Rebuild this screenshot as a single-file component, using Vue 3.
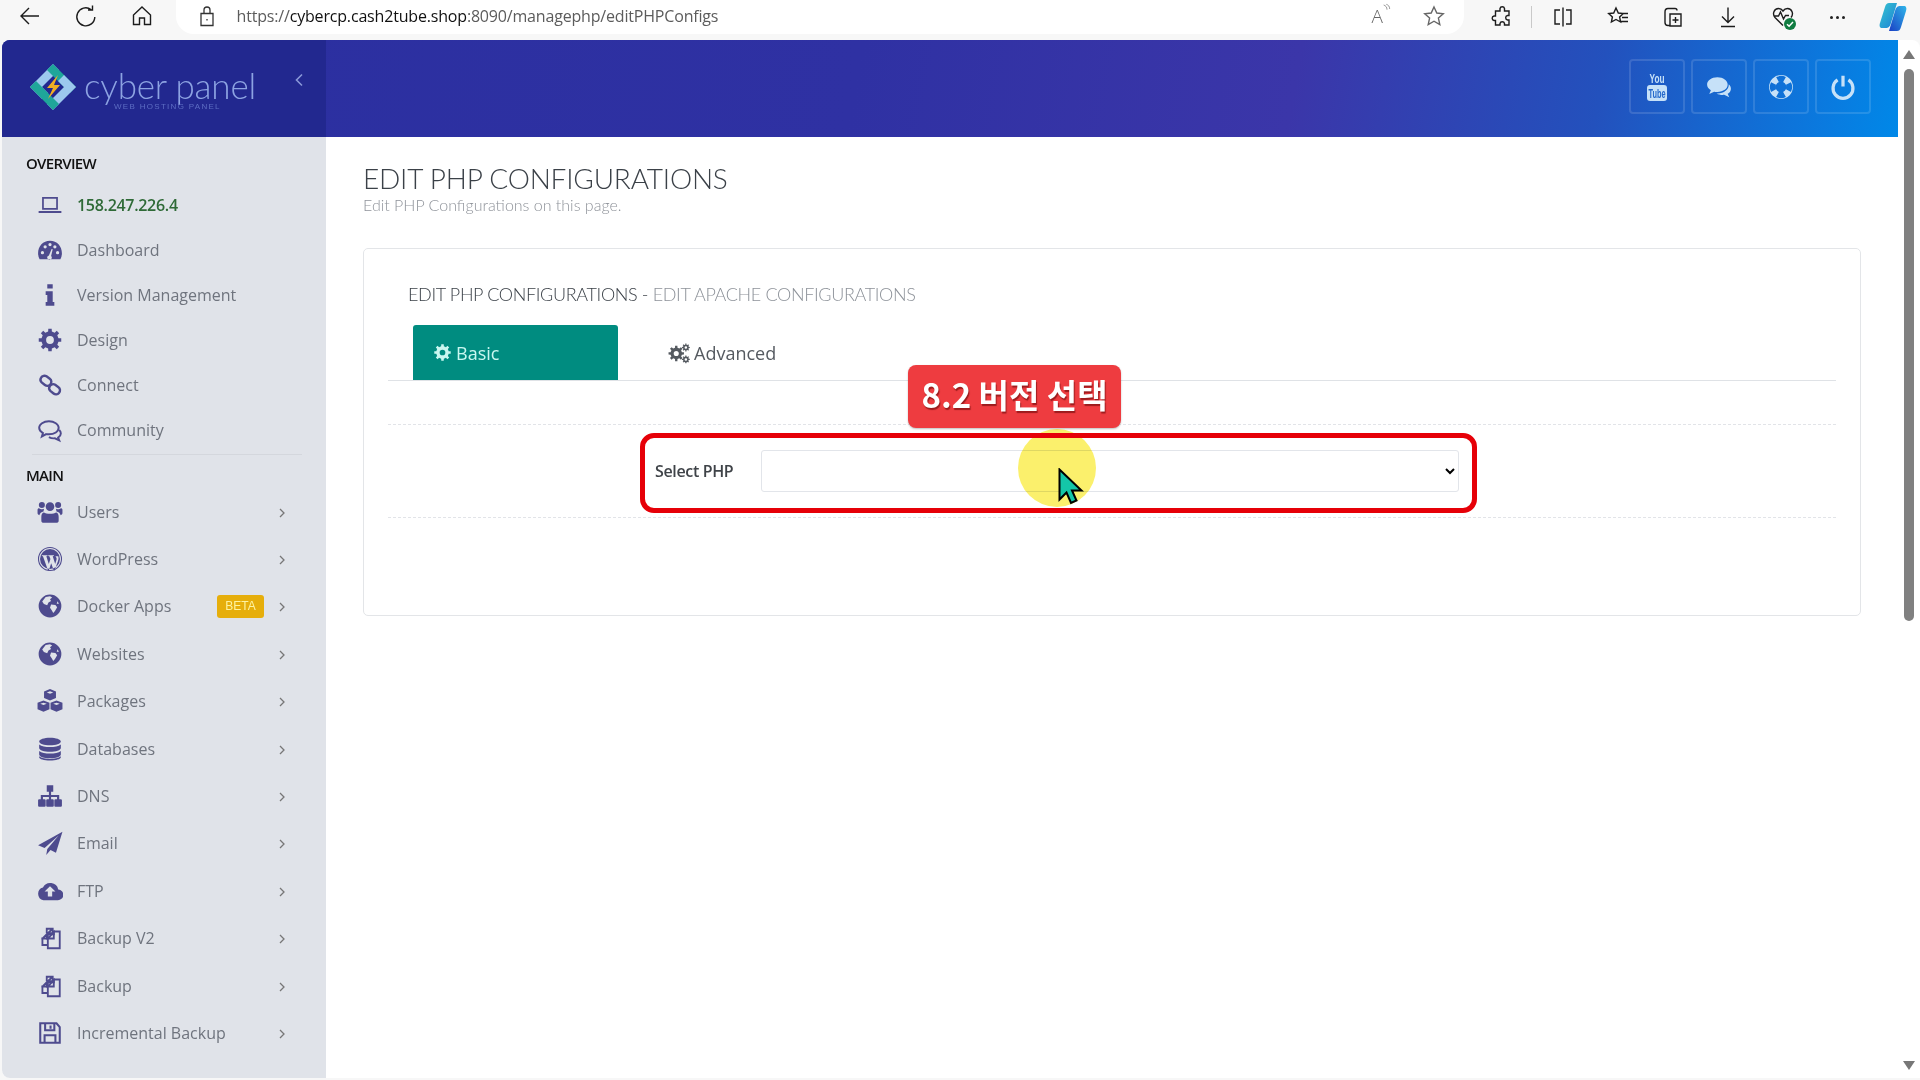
<script setup>
const circle = (cx, cy, r) => `M${cx - r} ${cy}a${r} ${r} 0 1 0 ${r * 2} 0a${r} ${r} 0 1 0 ${-r * 2} 0Z`

// gear outline with a round hole, used by Design, Basic and Advanced
function gear(cx, cy, R, r, hole, n = 8) {
  let d = ''
  for (let i = 0; i < n; i++) {
    const a = (i * 2 * Math.PI) / n
    const w = Math.PI / n
    const pts = [[r, a - w * 0.55], [R, a - w * 0.38], [R, a + w * 0.38], [r, a + w * 0.55]]
    pts.forEach(([rad, ang], j) => {
      const x = (cx + rad * Math.cos(ang)).toFixed(2)
      const y = (cy + rad * Math.sin(ang)).toFixed(2)
      d += `${i === 0 && j === 0 ? 'M' : 'L'}${x} ${y}`
    })
  }
  return d + 'Z' + circle(cx, cy, hole)
}

const line = (d, sw = 1.6) => ({ d, stroke: 'currentColor', sw, fill: 'none' })
const solid = (d) => ({ d, fill: 'currentColor' })

const globe = [solid(circle(12, 12, 10.5) + 'M8 3.6l4-.6 2 1.2-2 1.6 1 1.6-2.4 1.4-1.2 2.4-3-1-1.6-2.4ZM13 10.5l4 .6 1.6 2-2 3.4-1.6 2-1.4-2.6-1.6-2.4ZM19 7.5l1.2 2.4-2 0Z')]
const copy = [line('M9 7.5V3.5h5.5v4H10L5 12.500v6h5M14.500 3.500L9 8.500M4 12.500h5V8', 1.7), line('M10 8.500h5.500V6h5.500v15.500H10Z', 1.7), line('M15.500 6.500L10 12.500h5.500Z', 1.7)]

const icons = {
  laptop: [line('M5.500 5.500h13v10h-13Z', 1.6), line('M1.500 18.500h21', 1.8)],
  dashboard: [solid('M12 3.500C5.600 3.500 1 8.500 1 15c0 2 .5 3.800 1.400 5.500h19.200c.9-1.700 1.400-3.500 1.400-5.500 0-6.500-4.600-11.500-11-11.500Z' + circle(5, 14.500, 1.500) + circle(7.500, 9, 1.500) + circle(12, 7, 1.500) + circle(19, 14.500, 1.500) + circle(16.500, 9, 1.500) + 'M11 17l2.500-6 1 .4-1.500 6.200a2 2 0 1 1-2-.6Z')],
  info: [solid('M9.500 2h5v4h-5ZM8 8.500h6.500v10H16V22H8v-3.500h1.500V12H8Z')],
  cog: [solid(gear(12, 12, 10.5, 8, 3.6))],
  link: [line('M3.800 5.200a3.600 3.600 0 0 1 5-1.200l3 2.200a3.600 3.600 0 0 1 .5 5.300 3.600 3.600 0 0 1-5 .5l-3-2.400a3.500 3.500 0 0 1-.5-4.400Z', 2.2), line('M11.800 13a3.600 3.600 0 0 1 5-1.200l3 2.200a3.600 3.600 0 0 1 .5 5.300 3.600 3.600 0 0 1-5 .5l-3-2.400a3.500 3.500 0 0 1-.5-4.400Z', 2.2)],
  community: [line('M11 4C6 4 2 6.600 2 10c0 2 1.400 3.700 3.500 4.800L4.500 18l4-2.200c.8.100 1.600.200 2.500.200 5 0 9-2.600 9-6s-4-6-9-6Z', 1.8), line('M20.500 12c1 1 1.500 2 1.500 3.200 0 1.500-1 2.800-2.500 3.800l1 2.500-4-1.800c-2 .2-4-.3-5.500-1.200', 1.8)],
  users: [solid(circle(12, 7, 4) + circle(4.500, 5.500, 2.800) + circle(19.500, 5.500, 2.800) + 'M6.500 12.500c1.500 1.500 9.500 1.500 11 0 1.500 0 2.500 1.500 2.500 4v3.500c0 1.200-1 2-2 2H6c-1 0-2-.8-2-2v-3.500c0-2.500 1-4 2.500-4ZM.500 10c0-1 .6-1.500 1.500-1.500 1.200 1.200 3.500 1.200 4.500.6l-.5 2.400c-2 .5-3.500 1.700-3.800 3.500C1 14.500.500 14 .500 13ZM23.500 10c0-1-.6-1.500-1.500-1.500-1.200 1.200-3.500 1.200-4.500.6l.5 2.400c2 .5 3.500 1.700 3.800 3.500 1.200-.5 1.700-1 1.700-2Z')],
  wordpress: [line(circle(12, 12, 10.6), 1), solid(circle(12, 12, 9.200) + 'M4.500 8.500h5.200v.8l-1.100.2 2.300 7 1.500-4.400-1-2.600-1-.2v-.8h5.200v.8l-1.100.2 2.300 7 1.200-3.800c.5-1.500-.4-2.500-1-3.200h2.600c.5 1.500.3 3-.3 4.500l-3.100 8.500h-.7l-2.400-6.500-2.200 6.500h-.7L5.500 9.500l-1-.2Z')],
  globe,
  cubes: [solid('M12 1l5.500 2.200v6L12 11.500 6.500 9.200v-6ZM12 3L9 4.100l3 1.200 3-1.200ZM6 11.500l5.500 2.200v6L6 22 .5 19.700v-6ZM6 13.500l-3 1.100 3 1.200 3-1.200ZM18 11.500l5.500 2.200v6L18 22l-5.500-2.300v-6ZM18 13.500l-3 1.100 3 1.200 3-1.200Z')],
  database: [solid('M12 1.500c5.500 0 10 1.500 10 3.500s-4.500 3.500-10 3.500S2 7 2 5s4.500-3.500 10-3.500ZM2 7.800c2 1.700 6 2.400 10 2.400s8-.7 10-2.400V11c0 2-4.500 3.500-10 3.500S2 13 2 11ZM2 13.800c2 1.700 6 2.400 10 2.400s8-.7 10-2.400V17c0 2-4.500 3.500-10 3.500S2 19 2 17ZM2 18.800c2 1.700 6 2.400 10 2.400s8-.7 10-2.400v.7c0 1.800-4.500 3-10 3s-10-1.200-10-3Z')],
  sitemap: [solid('M9 2h6v6h-2v3h7.500v4H22a1 1 0 0 1 1 1v5a1 1 0 0 1-1 1h-5a1 1 0 0 1-1-1v-5a1 1 0 0 1 1-1h1.500v-2H13v2h1.500a1 1 0 0 1 1 1v5a1 1 0 0 1-1 1h-5a1 1 0 0 1-1-1v-5a1 1 0 0 1 1-1H11v-2H5.500v2H7a1 1 0 0 1 1 1v5a1 1 0 0 1-1 1H2a1 1 0 0 1-1-1v-5a1 1 0 0 1 1-1h1.500v-4H11V8H9Z')],
  plane: [solid('M23.500 1.500L1 14l6 2.500L20 5 9.500 17.500v0l-1 5.500 4-4.500 5 2.500Z')],
  cloud: [solid('M19.600 10.500A7.500 7.500 0 0 0 5.500 8.800 6 6 0 0 0 6 20.500h13a5 5 0 0 0 .6-10ZM12 7.500l5 5h-3v4.500h-4v-4.500H7Z')],
  copy,
  save: [line('M3 3h15l3 3.500V21H3Z', 1.9), line('M7.500 3.500v6h8.500v-6M12.500 5v3M7 20.500v-6.500h10v6.500', 1.9)],
  cogSmall: [solid(gear(9, 12.500, 8.500, 6.300, 2.800)), solid(gear(19.500, 6, 4.300, 3.200, 1.400)), solid(gear(19.500, 19, 4.300, 3.200, 1.400))],
  comments: [solid('M10.500 3C5 3 1 6 1 9.800c0 2.200 1.300 4 3.500 5.300L3 18.500l4.500-2.200c1 .2 2 .3 3 .3 5.500 0 9.500-3 9.500-6.800S16 3 10.500 3Z'), solid('M21 9.500c1.300 1.100 2 2.500 2 4 0 2-1.200 3.700-3 4.800l1.500 3.200-4.700-2.300c-2.500.3-5-.2-7-1.300 6 .5 11.500-3.200 11.200-8.400Z')],
  ring: [solid(circle(12, 12, 11) + circle(12, 12, 5) + 'M7.500 2.800L10 7.400a5.500 5.500 0 0 1 4 0l2.500-4.600a10.200 10.200 0 0 0-9 0ZM2.800 7.500L7.400 10a5.500 5.500 0 0 0 0 4l-4.600 2.500a10.200 10.200 0 0 1 0-9ZM21.200 7.500L16.600 10a5.500 5.500 0 0 1 0 4l4.600 2.500a10.200 10.200 0 0 0 0-9ZM7.500 21.200l2.500-4.600a5.500 5.500 0 0 0 4 0l2.500 4.600a10.200 10.200 0 0 1-9 0Z')],
  power: [line('M7 5.500a9.200 9.200 0 1 0 10 0', 3), line('M12 1.500v10', 3)],
}

const overview = [
  { name: '158.247.226.4', icon: 'laptop', ip: true },
  { name: 'Dashboard', icon: 'dashboard' },
  { name: 'Version Management', icon: 'info' },
  { name: 'Design', icon: 'cog' },
  { name: 'Connect', icon: 'link' },
  { name: 'Community', icon: 'community' },
]

const mainMenu = [
  { name: 'Users', icon: 'users' },
  { name: 'WordPress', icon: 'wordpress' },
  { name: 'Docker Apps', icon: 'globe', badge: 'BETA' },
  { name: 'Websites', icon: 'globe' },
  { name: 'Packages', icon: 'cubes', wide: true },
  { name: 'Databases', icon: 'database' },
  { name: 'DNS', icon: 'sitemap' },
  { name: 'Email', icon: 'plane' },
  { name: 'FTP', icon: 'cloud' },
  { name: 'Backup V2', icon: 'copy' },
  { name: 'Backup', icon: 'copy' },
  { name: 'Incremental Backup', icon: 'save' },
]

const headerButtons = ['comments', 'ring', 'power']
</script>

<template>
  <div class="screen">
    <div class="chrome">
      <div class="nav">
        <svg class="tool-icon" viewBox="0 0 24 24"><path d="M21 12H3.500M11 4l-8 8 8 8" /></svg>
        <svg class="tool-icon" viewBox="0 0 24 24"><path d="M17 5.500A9 9 0 1 0 20.800 13M14 6h4.500V1.500" /></svg>
        <svg class="tool-icon" viewBox="0 0 24 24"><path d="M12 3l8.500 8v9.500h-6V14h-5v6.500h-6V11Z" /></svg>
      </div>
      <div class="address">
        <svg class="lock" viewBox="0 0 24 24"><path d="M6 9.500h12v12H6ZM9 9.500V6a3 3 0 0 1 6 0v3.500M12 15v1.500" /></svg>
        <div class="url"><span class="dim">https://</span>cybercp.cash2tube.shop<span class="dim">:8090/managephp/editPHPConfigs</span></div>
        <div class="address-end">
          <span class="read">A<svg viewBox="0 0 12 16"><path d="M1 2c3 1 5 3 5 7M5 1c3 1 5 3 5 7" /></svg></span>
          <svg class="tool-icon grey" viewBox="0 0 24 24"><path d="M12 3l2.800 6 6.500.7-4.900 4.400 1.400 6.400L12 17.200 6.200 20.500l1.400-6.400L2.700 9.700 9.200 9Z" /></svg>
        </div>
      </div>
      <div class="tools">
        <span class="tool"><svg class="tool-icon" viewBox="0 0 24 24"><path d="M10 3.500a2.300 2.300 0 0 1 4.500 0V6H19v4.500h-1.500a2.300 2.300 0 0 0 0 4.500H19v5h-4.500v-1.500a2.300 2.300 0 0 0-4.500 0V20H5.500v-4.500H4a2.300 2.300 0 0 1 0-4.500h1.500V6H10Z" /></svg></span>
        <span class="divider"></span>
        <span class="tool"><svg class="tool-icon" viewBox="0 0 24 24"><path d="M12 2.500v19M9 5H4v14h5M15 5h5v14h-5" /></svg></span>
        <span class="tool"><svg class="tool-icon" viewBox="0 0 24 24"><path d="M10 3l2.300 5 5 .6-3.700 3.300 1 5.100L10 14.500 5.400 17l1-5.100-3.700-3.300 5-.6ZM15 8.500h7M16 12.500h6M15 16.500h7" /></svg></span>
        <span class="tool"><svg class="tool-icon" viewBox="0 0 24 24"><path d="M9 20.500H7a3 3 0 0 1-3-3V7c0-2 1-3.500 3-3.500h7c1 0 2 .5 2 2M9 9h11v12H9ZM14.500 12v6M11.500 15h6" /></svg></span>
        <span class="tool"><svg class="tool-icon" viewBox="0 0 24 24"><path d="M12 2.500v15M6 11.500l6 6 6-6M5 21.500h14" /></svg></span>
        <span class="tool health">
          <svg class="tool-icon" viewBox="0 0 24 24"><path d="M12 20.500L4 12.500C1 9 3 3.500 7.500 3.500c2 0 3.500 1 4.500 2.500 1-1.500 2.500-2.500 4.500-2.500 4.500 0 6.500 5.500 3.500 9M3 11h4.500l2-4 3 7 2-3.500H18" /></svg>
          <svg class="health-ok" viewBox="0 0 12 12"><circle cx="6" cy="6" r="6" fill="#107c41" /><path d="M3 6.200l2.100 2L9 4" fill="none" stroke="#fff" stroke-width="1.500" /></svg>
        </span>
        <span class="tool dots"><i></i><i></i><i></i></span>
        <span class="tool">
          <svg class="copilot" viewBox="0 0 28 30">
            <defs>
              <linearGradient id="copA" x1="0" y1="0" x2="1" y2="1"><stop offset="0" stop-color="#37c6d0" /><stop offset="1" stop-color="#1b7fd6" /></linearGradient>
              <linearGradient id="copB" x1="0" y1="1" x2="1" y2="0"><stop offset="0" stop-color="#1a3fc4" /><stop offset="1" stop-color="#2fb6ea" /></linearGradient>
            </defs>
            <path d="M10 1h8l-6 20c-1 4-3 5-5 5H3c-2 0-3-2-2-5L6 5c1-3 2-4 4-4Z" fill="url(#copA)" />
            <path d="M18 29h-8l6-20c1-4 3-5 5-5h4c2 0 3 2 2 5l-5 16c-1 3-2 4-4 4Z" fill="url(#copB)" />
          </svg>
        </span>
      </div>
    </div>

    <div class="frame">
      <div class="page">
        <header class="topbar">
          <div class="brand">
            <svg class="logo" viewBox="0 0 46 46">
              <path d="M23 0l6 6-17 17 6 6-6 6L0 23Z" fill="#9cc8ee" />
              <path d="M23 0l23 23-6 6L23 12l-6-6Z" fill="#1fa69a" />
              <path d="M46 23L23 46l-6-6 17-17-6-6 6-6Z" fill="#9cc8ee" />
              <path d="M23 46L0 23l6-6 17 17 6 6Z" fill="#1fa69a" />
              <path d="M28 11l-11 13h6l-5 11 12-14h-6l4-10Z" fill="#f0ae24" />
            </svg>
            <div class="brand-text">
              <div class="brand-name">cyber panel</div>
              <div class="brand-sub">WEB HOSTING PANEL</div>
            </div>
            <svg class="collapse" viewBox="0 0 10 14"><path d="M8 1.500L2.500 7 8 12.500" /></svg>
          </div>
          <div class="topbar-right">
            <button class="head-btn">
              <svg class="head-icon" viewBox="0 0 24 30">
                <text x="12" y="11" text-anchor="middle" textLength="15" lengthAdjust="spacingAndGlyphs" class="yt-you">You</text>
                <rect x="2" y="13" width="20" height="16" rx="3" fill="currentColor" />
                <text x="12" y="26" text-anchor="middle" textLength="17" lengthAdjust="spacingAndGlyphs" class="yt-tube">Tube</text>
              </svg>
            </button>
            <button v-for="b in headerButtons" :key="b" class="head-btn">
              <svg class="head-icon" viewBox="0 0 24 24">
                <path v-for="(p, i) in icons[b]" :key="i" :d="p.d" :fill="p.fill" fill-rule="evenodd" :stroke="p.stroke" :stroke-width="p.sw" />
              </svg>
            </button>
          </div>
        </header>

        <div class="body">
          <aside class="sidebar">
            <div class="section first">OVERVIEW</div>
            <a v-for="item in overview" :key="item.name" class="item">
              <svg class="item-icon" viewBox="0 0 24 24">
                <path v-for="(p, i) in icons[item.icon]" :key="i" :d="p.d" :fill="p.fill" fill-rule="evenodd" :stroke="p.stroke" :stroke-width="p.sw" />
              </svg>
              <span class="item-name" :class="{ ip: item.ip }">{{ item.name }}</span>
            </a>
            <div class="rule"></div>
            <div class="section">MAIN</div>
            <a v-for="item in mainMenu" :key="item.name" class="item tall">
              <svg class="item-icon" :class="{ wide: item.wide }" viewBox="0 0 24 24">
                <path v-for="(p, i) in icons[item.icon]" :key="i" :d="p.d" :fill="p.fill" fill-rule="evenodd" :stroke="p.stroke" :stroke-width="p.sw" />
              </svg>
              <span class="item-name">{{ item.name }}</span>
              <span v-if="item.badge" class="badge">{{ item.badge }}</span>
              <svg class="arrow" viewBox="0 0 8 12"><path d="M2 2l4 4-4 4" /></svg>
            </a>
          </aside>

          <main class="content">
            <h1 class="title">EDIT PHP CONFIGURATIONS</h1>
            <p class="subtitle">Edit PHP Configurations on this page.</p>
            <section class="card">
              <h2 class="card-title">EDIT PHP CONFIGURATIONS - <span>EDIT APACHE CONFIGURATIONS</span></h2>
              <div class="tabs">
                <a class="tab active">
                  <svg class="tab-icon" viewBox="0 0 24 24"><path :d="icons.cog[0].d" fill="currentColor" fill-rule="evenodd" /></svg>
                  Basic
                </a>
                <a class="tab">
                  <svg class="tab-icon" viewBox="0 0 24 24">
                    <path v-for="(p, i) in icons.cogSmall" :key="i" :d="p.d" fill="currentColor" fill-rule="evenodd" />
                  </svg>
                  Advanced
                </a>
              </div>
              <div class="form-row">
                <label class="form-label">Select PHP</label>
                <select class="form-select"></select>
              </div>
            </section>
          </main>
        </div>
      </div>

      <div class="scrollbar">
        <span class="arrow-up"></span>
        <span class="thumb"></span>
        <span class="arrow-down"></span>
      </div>
    </div>

    <!-- video annotations over the page -->
    <div class="highlight"></div>
    <div class="red-box"></div>
    <div class="callout">8.2 버전 선택</div>
    <svg class="pointer" viewBox="0 0 26 37"><path d="M1.500 1.500v30l7-7 4.500 10.500 5.500-2.500-4.500-10h9.500Z" /></svg>
  </div>
</template>

<style scoped>
.screen {
  position: relative;
  width: 1920px;
  height: 1080px;
  overflow: hidden;
  background: #f7f7f7;
  font-family: "Open Sans", sans-serif;
}

.chrome {
  display: flex;
  align-items: flex-start;
  height: 40px;
}

.nav {
  display: flex;
  gap: 32px;
  width: 176px;
  box-sizing: border-box;
  padding: 4px 0 0 18px;
}

.tool-icon {
  width: 24px;
  height: 24px;
  fill: none;
  stroke: #1c1c1c;
  stroke-width: 1.4;
}

.tool-icon.grey {
  stroke: #666;
}

.address {
  display: flex;
  align-items: center;
  width: 1292px;
  height: 34px;
  padding: 0 18px 2px 19px;
  box-sizing: border-box;
  background: #fff;
  border-radius: 0 0 18px 18px;
}

.lock {
  width: 24px;
  height: 24px;
  fill: none;
  stroke: #333;
  stroke-width: 1.3;
}

.url {
  margin-left: 18px;
  font-size: 16px;
  letter-spacing: -0.18px;
  color: #111;
  white-space: nowrap;
}

.dim {
  color: #5c5c5c;
}

.address-end {
  display: flex;
  align-items: center;
  gap: 31px;
  margin-left: auto;
}

.read {
  display: flex;
  font-size: 19px;
  font-weight: 300;
  color: #666;
}

.read svg {
  width: 8px;
  height: 12px;
  fill: none;
  stroke: #666;
}

.tools {
  display: flex;
  align-items: center;
  height: 34px;
  margin-left: 10px;
}

.tool {
  position: relative;
  display: flex;
  align-items: center;
  justify-content: center;
  width: 55px;
}

.divider {
  width: 1px;
  height: 22px;
  margin: 0 3px 0 2px;
  background: #c9c9c9;
}

.health-ok {
  position: absolute;
  left: 29px;
  top: 13px;
  width: 12px;
  height: 12px;
}

.dots {
  gap: 3px;
}

.dots i {
  width: 3px;
  height: 3px;
  border-radius: 50%;
  background: #222;
}

.copilot {
  width: 28px;
  height: 30px;
}

.frame {
  display: flex;
  height: 1038px;
}

.page {
  display: flex;
  flex-direction: column;
  width: 1896px;
  margin-left: 2px;
  background: #fff;
  border-radius: 8px 0 0 8px;
  overflow: hidden;
}

.topbar {
  display: flex;
  flex-shrink: 0;
  height: 97px;
  background: linear-gradient(100deg, #2a2f9f 0%, #2f31a3 45%, #3b36a9 68%, #2351bd 84%, #0a7adf 96%, #0088e8 100%);
}

.brand {
  position: relative;
  display: flex;
  align-items: center;
  width: 324px;
  padding-left: 28px;
  box-sizing: border-box;
  background: #22288f;
}

.logo {
  width: 46px;
  height: 46px;
  margin-bottom: 3px;
}

.brand-text {
  margin-left: 8px;
}

.brand-name {
  font-family: Lato, sans-serif;
  font-size: 35px;
  font-weight: 300;
  line-height: 40px;
  letter-spacing: -0.2px;
  color: #8da3e2;
}

.brand-sub {
  margin: -3px 0 0 30px;
  font-family: "Liberation Sans", sans-serif;
  font-size: 8px;
  line-height: 10px;
  letter-spacing: 1.3px;
  color: #5d6dc3;
}

.collapse {
  position: absolute;
  left: 292px;
  top: 33px;
  width: 10px;
  height: 14px;
  fill: none;
  stroke: #8a98d8;
  stroke-width: 1.6;
}

.topbar-right {
  display: flex;
  justify-content: flex-end;
  gap: 6px;
  flex: 1;
  padding: 19px 27px 0 0;
}

.head-btn {
  display: flex;
  align-items: center;
  justify-content: center;
  width: 56px;
  height: 55px;
  padding: 0;
  background: transparent;
  border: 2px solid rgba(255, 255, 255, 0.13);
  border-radius: 4px;
  color: #c6e1f8;
}

.head-icon {
  width: 26px;
  height: 30px;
}

.yt-you {
  font-family: "Liberation Sans", sans-serif;
  font-size: 12px;
  font-weight: 700;
  fill: currentColor;
}

.yt-tube {
  font-family: "Liberation Sans", sans-serif;
  font-size: 12px;
  font-weight: 700;
  fill: #2368cb;
}

.body {
  display: flex;
  flex: 1;
  min-height: 0;
}

.sidebar {
  flex-shrink: 0;
  width: 324px;
  padding-top: 13px;
  box-sizing: border-box;
  background: #e0e3e9;
}

.section {
  height: 26px;
  padding-left: 24px;
  font-size: 15px;
  font-weight: 600;
  line-height: 26px;
  letter-spacing: -0.7px;
  color: #111;
}

.section.first {
  margin-bottom: 6px;
}

.item {
  display: flex;
  align-items: center;
  height: 45px;
  padding-left: 35px;
  box-sizing: border-box;
}

.item.tall {
  height: 47.4px;
}

.item-icon {
  flex-shrink: 0;
  width: 26px;
  height: 26px;
  margin-right: 14px;
  color: #4e4b8e;
}

.item-icon.wide {
  width: 30px;
  margin: 0 12px 0 -2px;
}

.item-name {
  font-size: 16px;
  color: #6f747e;
  white-space: nowrap;
}

.item-name.ip {
  font-weight: 600;
  letter-spacing: -0.3px;
  color: #2f6a37;
}

.badge {
  position: absolute;
  left: 217px;
  width: 47px;
  height: 23px;
  font-family: "Liberation Sans", sans-serif;
  font-size: 12px;
  line-height: 22px;
  text-align: center;
  color: #fdf2a0;
  background: #e6ae0b;
  border-radius: 3px;
}

.arrow {
  width: 8px;
  height: 12px;
  margin: 2px 0 0 auto;
  margin-right: 40px;
  fill: none;
  stroke: #777;
  stroke-width: 1.3;
}

.rule {
  height: 1px;
  margin: 2px 24px 7px 30px;
  background: #d4d7dd;
}

.content {
  flex: 1;
  padding: 24px 37px 0 37px;
  min-width: 0;
}

.title {
  margin: 0;
  font-family: Lato, sans-serif;
  font-size: 28px;
  font-weight: 300;
  line-height: 34px;
  letter-spacing: -0.2px;
  color: #3b4148;
}

.subtitle {
  margin: 0;
  font-family: Lato, sans-serif;
  font-size: 16px;
  font-weight: 300;
  line-height: 20px;
  color: #8f939a;
}

.card {
  height: 368px;
  margin-top: 33px;
  padding: 0 24px;
  box-sizing: border-box;
  background: #fff;
  border: 1px solid #e3e5e8;
  border-radius: 5px;
}

.card-title {
  margin: 0;
  padding: 34px 0 0 20px;
  font-family: Lato, sans-serif;
  font-size: 18px;
  font-weight: 300;
  line-height: 22px;
  letter-spacing: -0.35px;
  color: #3b4148;
}

.card-title span {
  color: #8d9299;
}

.tabs {
  display: flex;
  height: 55px;
  margin-top: 20px;
  padding-left: 25px;
  border-bottom: 1px solid #dfe2e6;
}

.tab {
  display: flex;
  align-items: center;
  gap: 4px;
  width: 205px;
  height: 55px;
  padding-left: 20px;
  box-sizing: border-box;
  font-size: 18px;
  color: #555a60;
}

.tab.active {
  margin-right: 30px;
  color: #c9f7f0;
  background: #008c80;
  border-radius: 3px 3px 0 0;
}

.tab-icon {
  width: 19px;
  height: 19px;
}

.tab:not(.active) .tab-icon {
  width: 22px;
  height: 22px;
}

.form-row {
  display: flex;
  align-items: center;
  height: 92px;
  margin-top: 43px;
  padding: 0 0 0 267px;
  border-top: 1px dashed #e2e4e8;
  border-bottom: 1px dashed #e2e4e8;
}

.form-label {
  width: 106px;
  font-size: 16px;
  font-weight: 600;
  letter-spacing: -0.35px;
  color: #3f4348;
}

.form-select {
  width: 698px;
  height: 42px;
  background: #fff;
  border: 1px solid #e2e5ea;
  border-radius: 3px;
}

.scrollbar {
  position: relative;
  display: flex;
  flex-direction: column;
  align-items: center;
  width: 22px;
  padding-top: 10px;
  box-sizing: border-box;
  background: #fff;
  border-radius: 0 8px 0 0;
}

.arrow-up,
.arrow-down {
  width: 0;
  height: 0;
  border-left: 6px solid transparent;
  border-right: 6px solid transparent;
}

.arrow-up {
  border-bottom: 9px solid #777;
}

.arrow-down {
  position: absolute;
  bottom: 8px;
  border-top: 9px solid #777;
}

.thumb {
  width: 10px;
  height: 552px;
  margin-top: 10px;
  background: #808080;
  border-radius: 5px;
}

.highlight {
  position: absolute;
  left: 1018px;
  top: 429px;
  width: 78px;
  height: 78px;
  border-radius: 50%;
  background: #fbf06c;
  mix-blend-mode: multiply;
}

.red-box {
  position: absolute;
  left: 640px;
  top: 433px;
  width: 837px;
  height: 80px;
  box-sizing: border-box;
  border: 5px solid #e60008;
  border-radius: 14px;
}

.callout {
  position: absolute;
  left: 908px;
  top: 365px;
  width: 213px;
  height: 63px;
  font-family: "Noto Sans CJK KR", sans-serif;
  font-size: 33px;
  font-weight: 700;
  line-height: 58px;
  text-align: center;
  color: #fff;
  text-shadow: 1px 2px 1px rgba(90, 0, 0, 0.55);
  background: #ee3c40;
  border-radius: 8px;
  box-shadow: 0 1px 2px rgba(0, 0, 0, 0.25);
}

.pointer {
  position: absolute;
  left: 1058px;
  top: 468px;
  width: 26px;
  height: 37px;
  fill: #14c6a8;
  stroke: #000;
  stroke-width: 2;
}
</style>

<style>
html,
body {
  margin: 0;
  background: #f7f7f7;
}
</style>
